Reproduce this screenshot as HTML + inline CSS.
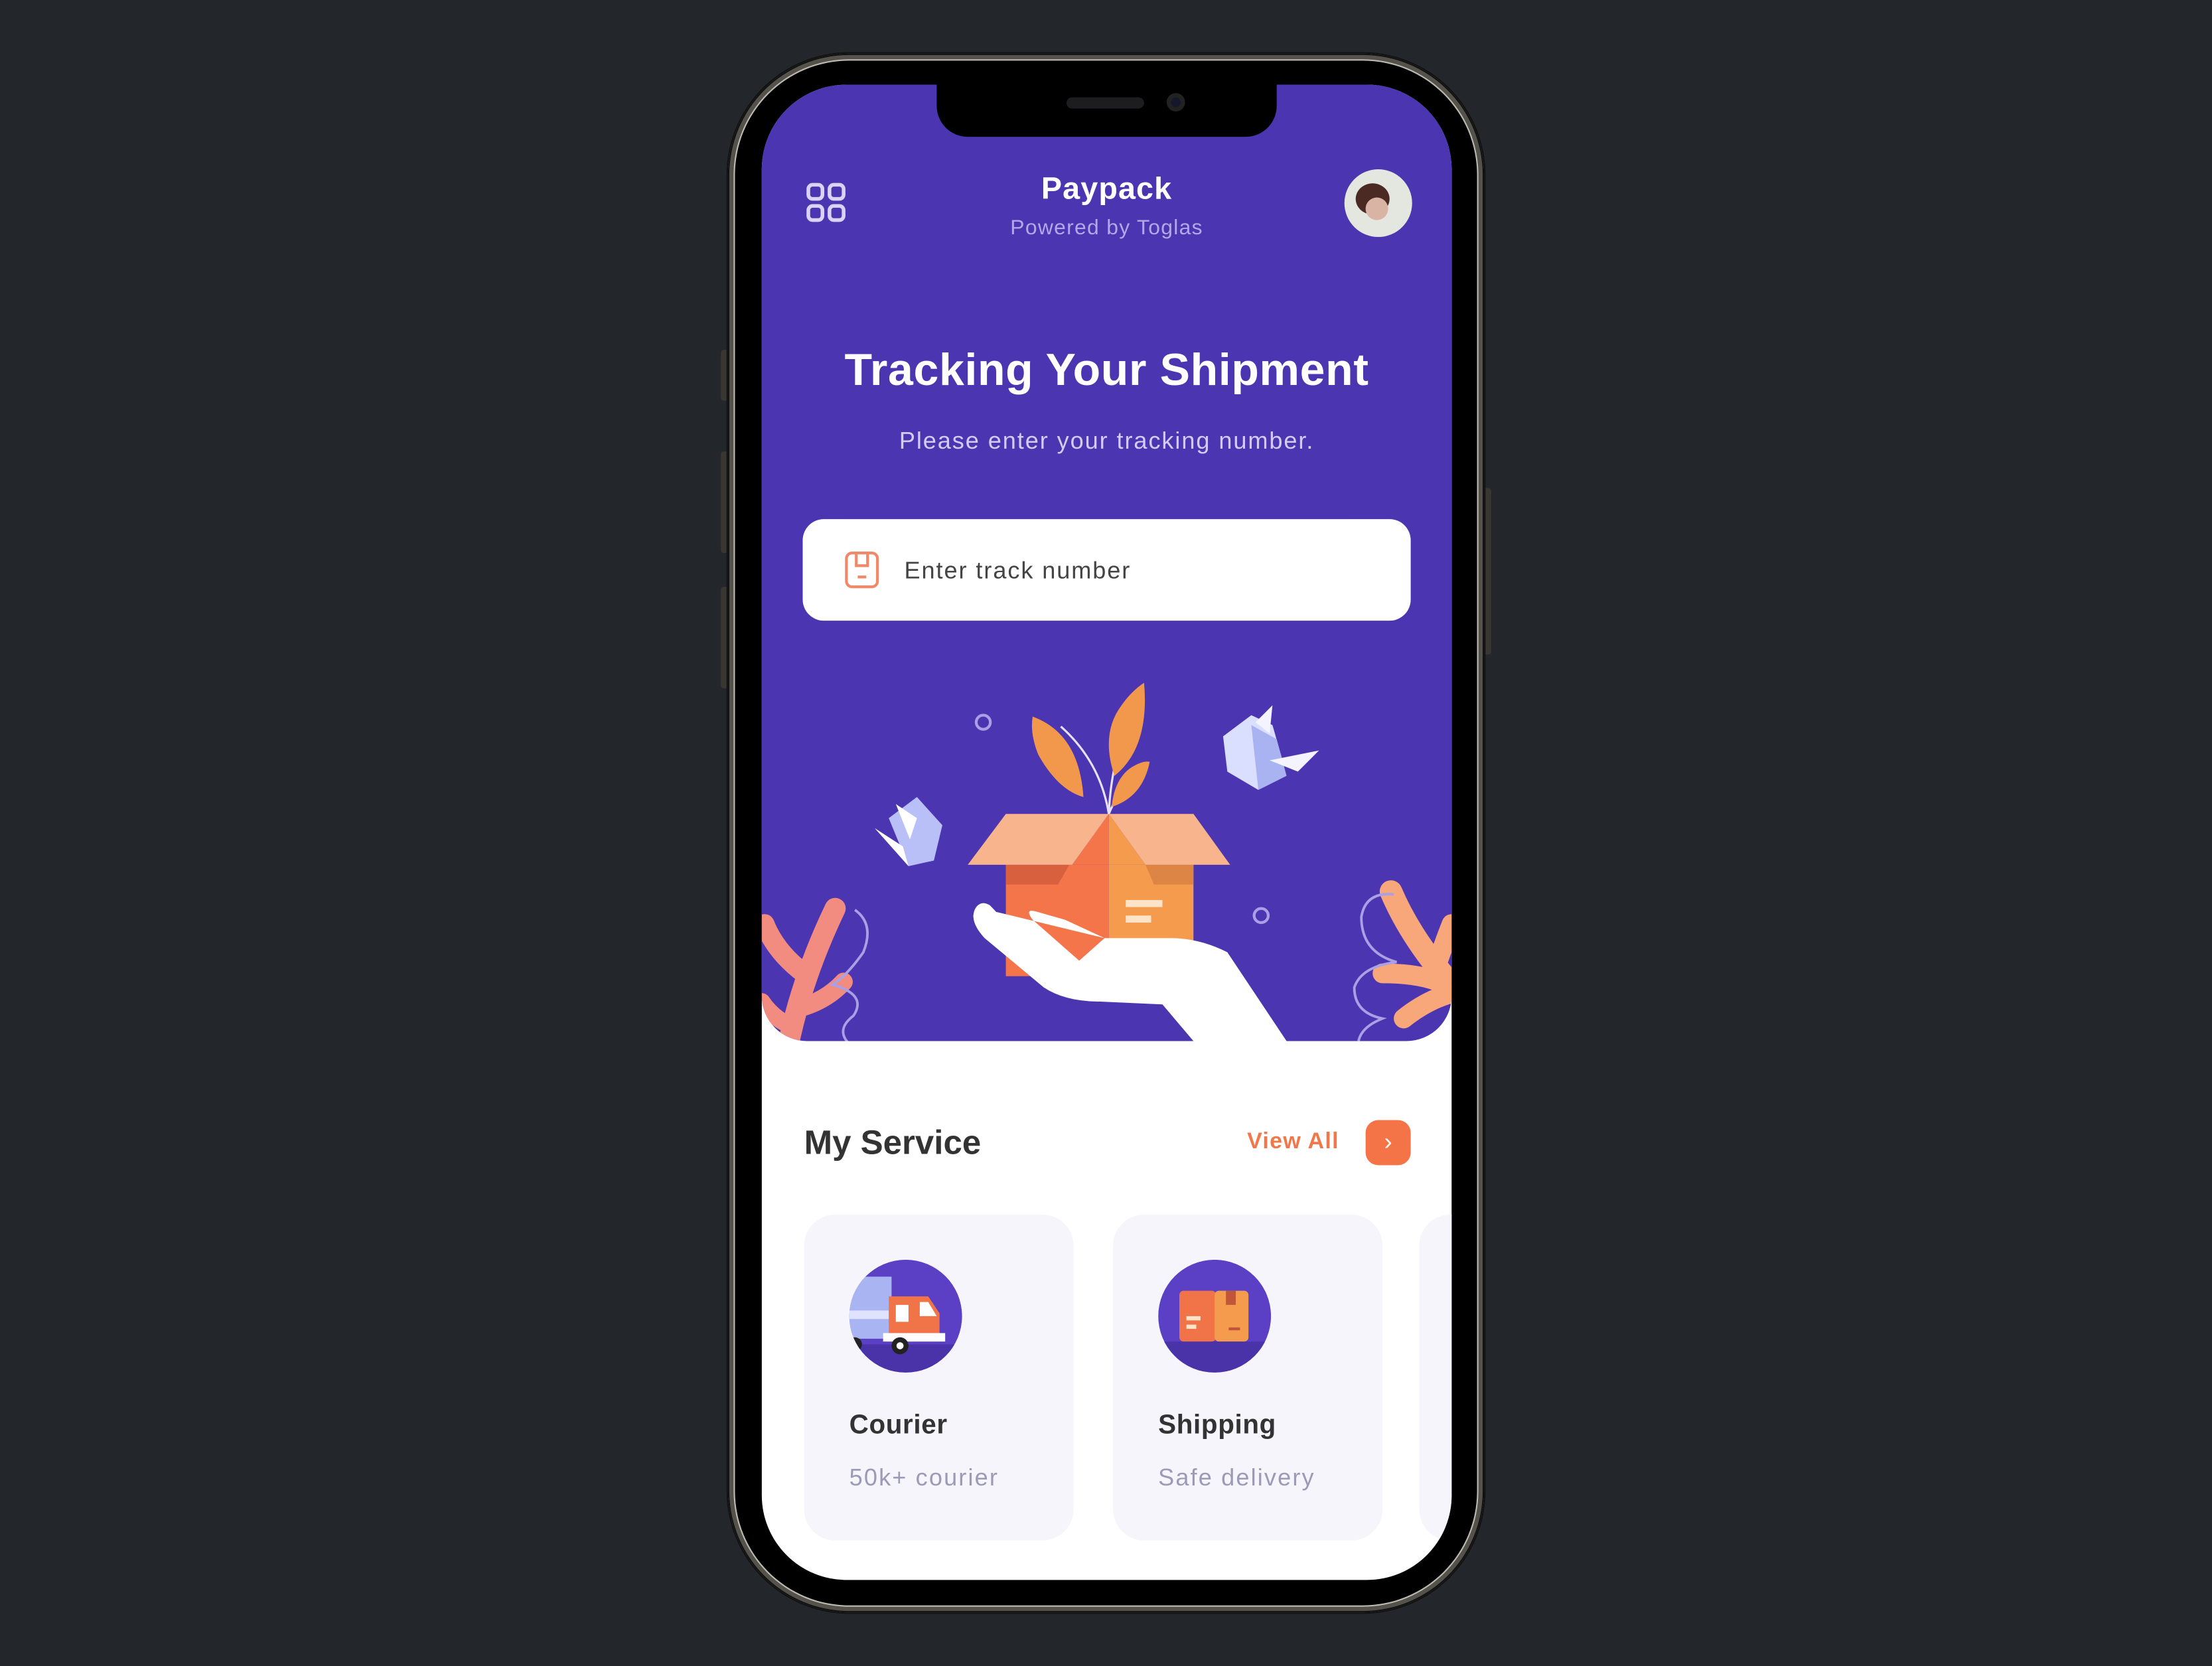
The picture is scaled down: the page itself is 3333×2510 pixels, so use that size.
<!DOCTYPE html>
<html><head><meta charset="utf-8">
<style>
html,body{margin:0;padding:0;background:#23272b;width:3333px;height:2510px;overflow:hidden}
#w{position:absolute;left:0;top:0;width:1568px;height:1181px;transform:scale(2.12564,2.12532);transform-origin:0 0;font-family:"Liberation Sans","DejaVu Sans",sans-serif}
.abs{position:absolute}
#frame{left:516px;top:38px;width:536px;height:1105px;border-radius:86px;background:#000;box-shadow:0 0 0 1px #111 inset,0 0 0 4px #55524c inset,0 0 0 5px #bdbab2 inset,0 0 0 1px #111}
#screen{left:540px;top:60px;width:489px;height:1060px;border-radius:60px;background:#fff;overflow:hidden}
#purple{left:0;top:0;width:489px;height:678px;background:#4c35b1;border-radius:0 0 32px 32px;overflow:hidden}
#notch{left:664px;top:56px;width:241px;height:41px;background:#000;border-radius:0 0 22px 22px}
.btn{background:#3a3733}
</style></head><body>
<div id="w">
<div class="abs btn" style="left:511px;top:248px;width:6px;height:36px;border-radius:2px"></div>
<div class="abs btn" style="left:511px;top:320px;width:6px;height:72px;border-radius:2px"></div>
<div class="abs btn" style="left:511px;top:416px;width:6px;height:72px;border-radius:2px"></div>
<div class="abs btn" style="left:1051px;top:346px;width:6px;height:118px;border-radius:2px"></div>
<div id="frame" class="abs"></div>
<div id="screen" class="abs">
 <div id="purple" class="abs">
  <svg class="abs" style="left:31px;top:69px" width="30" height="30" viewBox="0 0 30 30" fill="none" stroke="#d9d3f5" stroke-width="2.6"><rect x="2" y="2" width="10" height="10" rx="3"/><rect x="17" y="2" width="10" height="10" rx="3"/><rect x="2" y="17" width="10" height="10" rx="3"/><rect x="17" y="17" width="10" height="10" rx="3"/></svg>
  <div class="abs" style="left:0;width:489px;top:61px;text-align:center;color:#fff;font-weight:bold;font-size:22px;letter-spacing:.5px">Paypack</div>
  <div class="abs" style="left:0;width:489px;top:93px;text-align:center;color:#b4a8e8;font-size:15px;letter-spacing:.6px">Powered by Toglas</div>
  <div class="abs" style="left:413px;top:60px;width:48px;height:48px;border-radius:50%;background:#e4e6e0;overflow:hidden">
   <div class="abs" style="left:8px;top:10px;width:24px;height:22px;border-radius:50%;background:#4a2a22"></div>
   <div class="abs" style="left:15px;top:20px;width:16px;height:16px;border-radius:50%;background:#d9b3a3"></div>
  </div>
  <div class="abs" style="left:0;width:489px;top:184px;text-align:center;color:#fff;font-weight:bold;font-size:32px;letter-spacing:.3px">Tracking Your Shipment</div>
  <div class="abs" style="left:0;width:489px;top:243px;text-align:center;color:#d4cdf3;font-size:17px;letter-spacing:.9px">Please enter your tracking number.</div>
  <div class="abs" style="left:29px;top:308px;width:431px;height:72px;background:#fff;border-radius:15px">
   <svg class="abs" style="left:29px;top:22px" width="26" height="28" viewBox="0 0 26 28" fill="none" stroke="#f0896a" stroke-width="2"><rect x="2" y="2" width="22" height="24" rx="4"/><path d="M9 2v9h8V2M10 19h6"/></svg>
   <div class="abs" style="left:72px;top:27px;font-size:17px;color:#444;letter-spacing:.9px">Enter track number</div>
  </div>
  <svg class="abs" style="left:0;top:400px" width="489" height="278" viewBox="0 0 489 278">
   <circle cx="157" cy="52" r="5" fill="none" stroke="#a9a0e6" stroke-width="2"/>
   <circle cx="354" cy="189" r="5" fill="none" stroke="#a9a0e6" stroke-width="2"/>
   <path d="M246 117 Q240 80 212 55" stroke="#e8e0ff" stroke-width="1.5" fill="none"/>
   <path d="M246 117 Q248 70 268 38" stroke="#e8e0ff" stroke-width="1.5" fill="none"/>
   <path d="M246 117 Q255 95 272 85" stroke="#e8e0ff" stroke-width="1.5" fill="none"/>
   <path d="M192 48 Q225 60 228 105 Q210 100 196 75 Q190 60 192 48Z" fill="#f2984c"/>
   <path d="M271 24 Q275 70 250 90 Q240 60 255 40Q262 30 271 24Z" fill="#f2984c"/>
   <path d="M275 80 Q270 105 248 112 Q250 92 262 84 Q270 79 275 80Z" fill="#f2984c"/>
   <path d="M173 153 H246 V232 H173Z" fill="#f4754a"/>
   <path d="M246 153 H306 V232 H246Z" fill="#f59b4d"/>
   <path d="M173 153 H218 L210 167 H173Z" fill="#d9603f"/>
   <path d="M272 153 H306 V167 H278Z" fill="#dd8544"/>
   <path d="M246 117 L220 153 L246 153Z" fill="#f4754a"/>
   <path d="M246 117 L272 153 L246 153Z" fill="#f59b4d"/>
   <path d="M146 153 L173 117 H246 L220 153Z" fill="#f8b48d"/>
   <path d="M246 117 H306 L332 153 H272Z" fill="#f8b48d"/>
   <rect x="258" y="178" width="26" height="5" fill="#fde3c8"/><rect x="258" y="189" width="18" height="5" fill="#fde3c8"/>
   <path d="M152 183 Q146 192 158 205 L200 240 Q215 250 240 250 L284 252 L306 278 L372 278 L330 215 Q310 205 290 205 L243 205 L225 221 L192 192 Q186 184 194 186 L215 192 L243 205 Z" fill="#fff"/>
   <path d="M152 183 Q146 192 158 205 L200 240 Q210 236 205 228 L162 182 Q156 178 152 183Z" fill="#fff"/>
   <path d="M327 62 L347 47 L362 54 L370 82 L352 100 L330 87Z" fill="#dadfff"/>
   <path d="M347 54 L365 64 L372 90 L352 100Z" fill="#aab3f2"/>
   <path d="M360 79 L395 72 L380 87Z M350 52 L362 40 L360 60Z" fill="#f3f4ff"/>
   <path d="M90 120 L110 105 L128 125 L122 150 L104 154 Z" fill="#b8c0f7"/>
   <path d="M80 127 L100 140 L104 154 Z M95 110 L110 120 L105 135Z" fill="#fff"/>
   <g stroke="#f28b80" stroke-linecap="round" fill="none">
    <path d="M20 275 Q30 230 52 184" stroke-width="15"/>
    <path d="M30 230 Q10 215 2 195" stroke-width="14"/>
    <path d="M25 255 Q45 250 58 236" stroke-width="13"/>
    <path d="M22 268 Q8 262 0 250" stroke-width="12"/>
   </g>
   <path d="M66 185 Q80 195 72 215 Q60 232 50 238 Q75 245 65 260 Q52 270 62 280" stroke="#a9a0e6" stroke-width="1.8" fill="none"/>
   <g stroke="#f8a77a" stroke-linecap="round" fill="none">
    <path d="M446 172 Q460 205 489 238" stroke-width="16"/>
    <path d="M478 225 Q485 205 489 195" stroke-width="14"/>
    <path d="M440 230 Q465 230 480 236" stroke-width="14"/>
    <path d="M455 262 Q470 250 486 245" stroke-width="14"/>
   </g>
   <path d="M448 174 Q428 172 425 190 Q425 215 450 222 Q425 225 420 240 Q420 258 440 262 Q425 268 423 278" stroke="#a9a0e6" stroke-width="1.8" fill="none"/>
  </svg>
 </div>
 <div class="abs" style="left:30px;top:737px;font-size:24px;font-weight:bold;color:#333">My Service</div>
 <div class="abs" style="left:344px;top:741px;font-size:16px;font-weight:bold;color:#f0784a;letter-spacing:.6px">View All</div>
 <div class="abs" style="left:428px;top:734px;width:32px;height:32px;border-radius:9px;background:#f57447;color:#fff;text-align:center;line-height:31px;font-size:17px">›</div>
 <div class="abs" style="left:30px;top:801px;width:191px;height:231px;border-radius:22px;background:#f6f5fb">
  <svg class="abs" style="left:32px;top:32px" width="80" height="80" viewBox="0 0 80 80"><clipPath id="c1"><circle cx="40" cy="40" r="40"/></clipPath><g clip-path="url(#c1)"><circle cx="40" cy="40" r="40" fill="#5b3fc4"/><rect x="0" y="60" width="80" height="20" fill="#4a32a8"/><rect x="0" y="12" width="30" height="44" fill="#a9b4f3"/><rect x="0" y="36" width="30" height="6" fill="#dfe3ff"/><path d="M28 26 H56 L64 38 V58 H28Z" fill="#f07448"/><path d="M50 30 H56 L62 40 H50Z" fill="#fff"/><rect x="33" y="32" width="9" height="12" fill="#fff"/><rect x="24" y="52" width="44" height="6" fill="#fff"/><circle cx="36" cy="61" r="6" fill="#222"/><circle cx="36" cy="61" r="2.5" fill="#fff"/><circle cx="4" cy="60" r="5" fill="#222"/></g></svg>
  <div class="abs" style="left:32px;top:139px;font-size:19px;font-weight:bold;color:#333;letter-spacing:.3px">Courier</div>
  <div class="abs" style="left:32px;top:177px;font-size:17px;color:#9c9ab6;letter-spacing:1px">50k+ courier</div>
 </div>
 <div class="abs" style="left:249px;top:801px;width:191px;height:231px;border-radius:22px;background:#f6f5fb">
  <svg class="abs" style="left:32px;top:32px" width="80" height="80" viewBox="0 0 80 80"><clipPath id="c2"><circle cx="40" cy="40" r="40"/></clipPath><g clip-path="url(#c2)"><circle cx="40" cy="40" r="40" fill="#5b3fc4"/><rect x="0" y="58" width="80" height="22" fill="#4a32a8"/><rect x="15" y="22" width="26" height="36" rx="3" fill="#f07448"/><rect x="40" y="22" width="24" height="36" rx="3" fill="#f59b4d"/><rect x="48" y="22" width="7" height="10" fill="#c0553a"/><rect x="20" y="40" width="10" height="3" fill="#fde3c8"/><rect x="20" y="46" width="7" height="3" fill="#fde3c8"/><rect x="50" y="48" width="8" height="2" fill="#c0553a"/></g></svg>
  <div class="abs" style="left:32px;top:139px;font-size:19px;font-weight:bold;color:#333;letter-spacing:.3px">Shipping</div>
  <div class="abs" style="left:32px;top:177px;font-size:17px;color:#9c9ab6;letter-spacing:1px">Safe delivery</div>
 </div>
 <div class="abs" style="left:466px;top:801px;width:191px;height:231px;border-radius:22px;background:#f6f5fb"></div>
</div>
<div id="notch" class="abs">
 <div class="abs" style="left:92px;top:13px;width:55px;height:8px;border-radius:4px;background:#1d1d20"></div>
 <div class="abs" style="left:163px;top:10px;width:13px;height:13px;border-radius:50%;background:#14182a;box-shadow:inset 0 0 0 3px #222"></div>
</div>
</div>
</body></html>
